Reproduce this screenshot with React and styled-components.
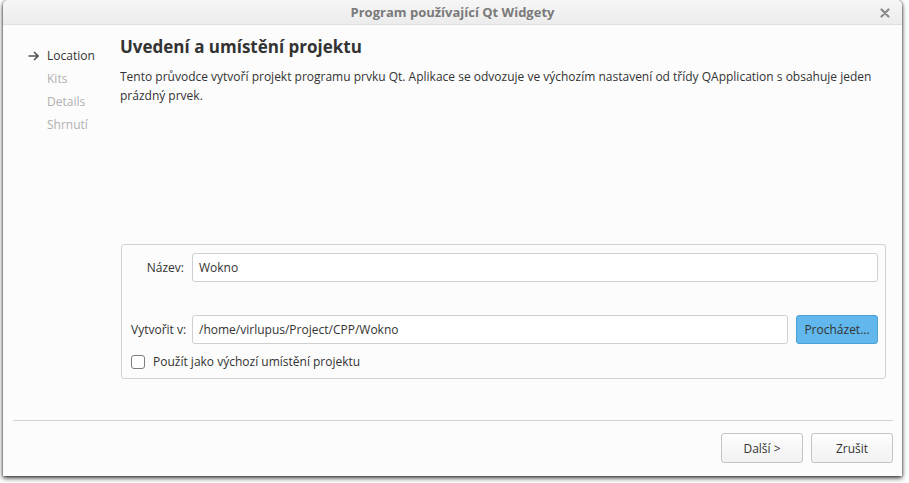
import React from "react";
import styled, { createGlobalStyle } from "styled-components";

const Global = createGlobalStyle`
  html, body { margin: 0; padding: 0; background: #ffffff; }
  body { font-family: "Open Sans", "Noto Sans", sans-serif; width: 909px; height: 483px; overflow: hidden; }
  * { box-sizing: border-box; }
`;

const Page = styled.div`
  width: 909px;
  height: 483px;
  padding-left: 3px;
`;

const Window = styled.div`
  width: 899px;
  height: 476px;
  background: #fcfcfc;
  border-radius: 5px 5px 0 0;
  box-shadow: 0 2px 5px rgba(0, 0, 0, 0.8), 0 0 2px rgba(0, 0, 0, 0.6);
  display: flex;
  flex-direction: column;
  overflow: hidden;
`;

const TitleBar = styled.div`
  height: 25px;
  flex: none;
  position: relative;
  display: flex;
  align-items: center;
  justify-content: center;
  background: linear-gradient(#f6f6f6, #ececec);
  border-bottom: 1px solid #e0e0e0;
  font-weight: 700;
  font-size: 13px;
  color: #7a7a7a;
`;

const CloseBtn = styled.div`
  position: absolute;
  right: 12px;
  top: 8px;
  width: 10px;
  height: 10px;
  display: flex;
`;

const Content = styled.div`
  flex: 1;
  display: flex;
  min-height: 0;
`;

const Sidebar = styled.div`
  width: 117px;
  flex: none;
  padding: 19px 0 0 25px;
  display: flex;
  flex-direction: column;
`;

const Step = styled.div`
  height: 23px;
  display: flex;
  align-items: center;
  font-size: 12px;
  color: ${(p) => (p.$active ? "#333333" : "#b0b0b0")};
`;

const ArrowSlot = styled.div`
  width: 19px;
  flex: none;
  display: flex;
  align-items: center;
`;

const Main = styled.div`
  flex: 1;
  display: flex;
  flex-direction: column;
  padding: 10px 16px 41px 0;
`;

const Heading = styled.h1`
  margin: 0;
  font-size: 17px;
  font-weight: 700;
  color: #333333;
  line-height: 23px;
`;

const Paragraph = styled.p`
  margin: 9px 0 0;
  font-size: 12px;
  line-height: 19px;
  color: #333333;
  padding-right: 6px;
`;

const GroupBox = styled.div`
  margin-top: auto;
  margin-left: 1px;
  border: 1px solid #d2d2d2;
  border-radius: 3px;
  padding: 8px 7px 9px 9px;
  display: flex;
  flex-direction: column;
`;

const FieldRow = styled.div`
  display: flex;
  align-items: center;
  gap: 8px;
  margin-top: ${(p) => p.$mt || 0}px;
`;

const Label = styled.label`
  width: 53px;
  flex: none;
  text-align: right;
  font-size: 12px;
  color: #333333;
  white-space: nowrap;
`;

const Input = styled.div`
  flex: 1;
  height: 29px;
  border: 1px solid #cfcfcf;
  border-radius: 3px;
  background: #ffffff;
  padding-left: 6px;
  display: flex;
  align-items: center;
  font-size: 12px;
  color: #333333;
`;

const Button = styled.button`
  width: 82px;
  height: ${(p) => p.$h || 30}px;
  flex: none;
  border-radius: 3px;
  font-family: inherit;
  font-size: 12px;
  color: #333333;
  border: 1px solid ${(p) => (p.$primary ? "#4ea2d6" : "#c4c4c4")};
  background: ${(p) =>
    p.$primary ? "#62b8ec" : "linear-gradient(#fdfdfd, #f1f1f1)"};
  padding: 0;
`;

const CheckRow = styled.div`
  display: flex;
  align-items: center;
  gap: 8px;
  height: 14px;
  line-height: 14px;
  margin-top: 11px;
  font-size: 12px;
  color: #333333;
`;

const Check = styled.div`
  width: 14px;
  height: 14px;
  border: 1px solid #7e7e7e;
  border-radius: 3px;
  background: #ffffff;
`;

const Footer = styled.div`
  flex: none;
  height: 56px;
  margin: 0 9px 0 10px;
  border-top: 1px solid #d0d0d0;
  display: flex;
  justify-content: flex-end;
  align-items: flex-start;
  padding-top: 12px;
  gap: 8px;
`;

const Arrow = () => (
  <svg width="11" height="10" viewBox="0 0 11 10">
    <path d="M0.5 5 H10 M6 1 L10 5 L6 9" fill="none" stroke="#555" strokeWidth="1.6" />
  </svg>
);

const Cross = () => (
  <svg width="10" height="10" viewBox="0 0 10 10">
    <path d="M1.5 1.5 L8.5 8.5 M8.5 1.5 L1.5 8.5" stroke="#8a8a8a" strokeWidth="2.2" strokeLinecap="round" />
  </svg>
);

export default function App() {
  return (
    <Page>
      <Global />
      <Window>
        <TitleBar>
          Program používající Qt Widgety
          <CloseBtn>
            <Cross />
          </CloseBtn>
        </TitleBar>
        <Content>
          <Sidebar>
            <Step $active>
              <ArrowSlot>
                <Arrow />
              </ArrowSlot>
              Location
            </Step>
            <Step>
              <ArrowSlot />
              Kits
            </Step>
            <Step>
              <ArrowSlot />
              Details
            </Step>
            <Step>
              <ArrowSlot />
              Shrnutí
            </Step>
          </Sidebar>
          <Main>
            <Heading>Uvedení a umístění projektu</Heading>
            <Paragraph>
              Tento průvodce vytvoří projekt programu prvku Qt. Aplikace se odvozuje ve výchozím
              nastavení od třídy QApplication s obsahuje jeden prázdný prvek.
            </Paragraph>
            <GroupBox>
              <FieldRow>
                <Label>Název:</Label>
                <Input>Wokno</Input>
              </FieldRow>
              <FieldRow $mt={33}>
                <Label>Vytvořit v:</Label>
                <Input>/home/virlupus/Project/CPP/Wokno</Input>
                <Button $primary $h={29}>Procházet...</Button>
              </FieldRow>
              <CheckRow>
                <Check />
                Použít jako výchozí umístění projektu
              </CheckRow>
            </GroupBox>
          </Main>
        </Content>
        <Footer>
          <Button>Další &gt;</Button>
          <Button>Zrušit</Button>
        </Footer>
      </Window>
    </Page>
  );
}
